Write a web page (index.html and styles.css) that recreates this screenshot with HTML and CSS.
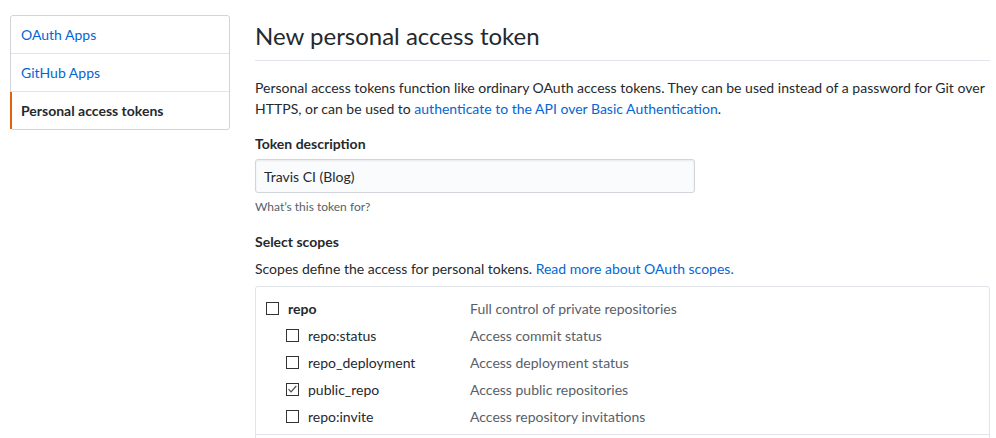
FILE: index.html
```html
<!DOCTYPE html>
<html lang="en">
<head>
<meta charset="utf-8">
<title>New personal access token</title>
<link rel="stylesheet" href="styles.css">
</head>
<body>
<div class="page">
  <nav class="menu">
    <a class="menu-item" href="#">OAuth Apps</a>
    <a class="menu-item" href="#">GitHub Apps</a>
    <a class="menu-item selected" href="#">Personal access tokens</a>
  </nav>
  <main class="main">
    <div class="subhead"><h2 class="subhead-title">New personal access token</h2></div>
    <p class="intro">Personal access tokens function like ordinary OAuth access tokens. They can be used instead of a password for Git over HTTPS, or can be used to <a href="#">authenticate to the API over Basic Authentication</a>.</p>

    <div class="form-group">
      <label class="label">Token description</label>
      <input class="input" type="text" value="Travis CI (Blog)">
      <p class="note">What’s this token for?</p>
    </div>

    <div class="form-group">
      <label class="label">Select scopes</label>
      <p class="scopes-note">Scopes define the access for personal tokens. <a href="#">Read more about OAuth scopes.</a></p>
    </div>

    <div class="scopes">
      <div class="scope-group">
        <div class="scope-row">
          <span class="scope-name top"><span class="box"></span><b>repo</b></span>
          <span class="scope-desc">Full control of private repositories</span>
        </div>
        <div class="scope-row">
          <span class="scope-name sub"><span class="box"></span>repo:status</span>
          <span class="scope-desc">Access commit status</span>
        </div>
        <div class="scope-row">
          <span class="scope-name sub"><span class="box"></span>repo_deployment</span>
          <span class="scope-desc">Access deployment status</span>
        </div>
        <div class="scope-row">
          <span class="scope-name sub"><span class="box checked"><svg width="11" height="11" viewBox="0 0 11 11"><path d="M1.5 5.2 L4 7.8 L9.3 2" fill="none" stroke="#4d4d4d" stroke-width="1.2"/></svg></span>public_repo</span>
          <span class="scope-desc">Access public repositories</span>
        </div>
        <div class="scope-row">
          <span class="scope-name sub"><span class="box"></span>repo:invite</span>
          <span class="scope-desc">Access repository invitations</span>
        </div>
      </div>
      <div class="scope-group next"></div>
    </div>
  </main>
</div>
</body>
</html>
```

FILE: styles.css
```css
html, body {
  margin: 0;
  padding: 0;
  background: #fff;
}
body {
  font-family: Lato, "Open Sans", "Liberation Sans", sans-serif;
  font-size: 14px;
  line-height: 21px;
  color: #24292e;
  overflow: hidden;
}
a {
  color: #0366d6;
  text-decoration: none;
}
.page {
  display: flex;
  align-items: flex-start;
  gap: 25px;
  padding: 15px 6px 0 10px;
}
.menu {
  width: 220px;
  flex: none;
  display: flex;
  flex-direction: column;
  border: 1px solid #d1d5da;
  border-radius: 3px;
  box-sizing: border-box;
}
.menu-item {
  display: block;
  padding: 8px 10px;
  border-bottom: 1px solid #e1e4e8;
  color: #0366d6;
}
.menu-item:last-child {
  border-bottom: 0;
}
.menu-item.selected {
  color: #24292e;
  font-weight: 700;
  border-left: 2px solid #e36209;
  margin-left: -1px;
  padding-left: 9px;
}
.main {
  flex: 1;
  min-width: 0;
}
.subhead {
  border-bottom: 1px solid #e1e4e8;
  padding-bottom: 6px;
  margin-bottom: 16px;
}
.subhead-title {
  margin: 0;
  padding-top: 3px;
  font-size: 24px;
  line-height: 36px;
  font-weight: 400;
}
.intro {
  margin: 0 0 14px;
}
.form-group {
  margin-bottom: 15px;
}
.label {
  display: block;
  font-weight: 700;
  margin-bottom: 5px;
}
.input {
  display: block;
  box-sizing: border-box;
  width: 440px;
  height: 34px;
  padding: 6px 8px;
  font: inherit;
  color: #24292e;
  background: #fafbfc;
  border: 1px solid #d1d5da;
  border-radius: 3px;
  box-shadow: inset 0 1px 2px rgba(27, 31, 35, 0.075);
  outline: none;
}
.note {
  margin: 5px 0 0;
  font-size: 12px;
  line-height: 18px;
  color: #586069;
}
.scopes-note {
  margin: 6px 0 0;
}
.scopes {
  margin-top: -8px;
  border: 1px solid #e1e4e8;
  border-radius: 3px;
}
.scope-group {
  padding: 8px 0 4px;
}
.scope-group.next {
  border-top: 1px solid #e1e4e8;
  height: 40px;
  box-sizing: border-box;
}
.scope-row {
  display: grid;
  grid-template-columns: 214px 1fr;
  height: 27px;
  align-items: center;
}
.scope-name {
  display: flex;
  align-items: center;
  gap: 9px;
  padding-left: 10px;
}
.scope-name.sub {
  padding-left: 30px;
}
.scope-name b {
  font-weight: 700;
}
.scope-desc {
  color: #586069;
}
.box {
  width: 13px;
  height: 13px;
  box-sizing: border-box;
  border: 1px solid #333;
  background: #fff;
  display: flex;
  align-items: center;
  justify-content: center;
  flex: none;
}
.box svg {
  display: block;
}
```
